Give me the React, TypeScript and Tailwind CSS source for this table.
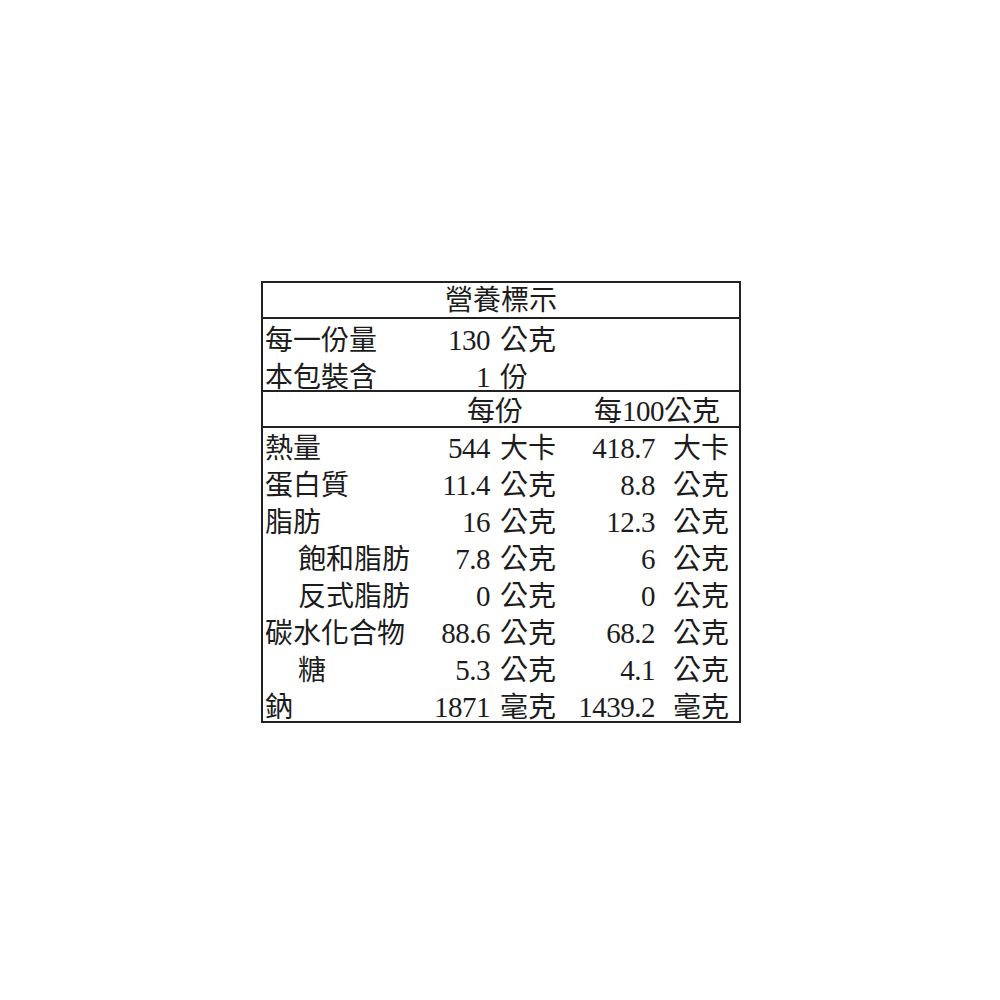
const font = { fontFamily: '"Liberation Serif", "Noto Sans CJK TC", serif' };

type Row = {
  label: string;
  indent?: boolean;
  a: string;
  ua: string;
  b: string;
  ub: string;
};

const rows: Row[] = [
  { label: "熱量", a: "544", ua: "大卡", b: "418.7", ub: "大卡" },
  { label: "蛋白質", a: "11.4", ua: "公克", b: "8.8", ub: "公克" },
  { label: "脂肪", a: "16", ua: "公克", b: "12.3", ub: "公克" },
  { label: "飽和脂肪", indent: true, a: "7.8", ua: "公克", b: "6", ub: "公克" },
  { label: "反式脂肪", indent: true, a: "0", ua: "公克", b: "0", ub: "公克" },
  { label: "碳水化合物", a: "88.6", ua: "公克", b: "68.2", ub: "公克" },
  { label: "糖", indent: true, a: "5.3", ua: "公克", b: "4.1", ub: "公克" },
  { label: "鈉", a: "1871", ua: "毫克", b: "1439.2", ub: "毫克" },
];

const grid = "grid grid-cols-[160px_67px_66px_99px_74px] items-center";
const num = "text-right text-[29px] tracking-[-0.5px]";

export default function App() {
  return (
    <div className="w-[1000px] h-[1000px] bg-white pt-[281px] pl-[261px]" style={font}>
      <div className="w-[480px] border-2 border-[#222] text-[28px] text-[#1c1c1c]">
        {/* title */}
        <div className="h-[36px] pt-[2px] flex items-center justify-center leading-none border-b-2 border-[#222]">
          營養標示
        </div>

        {/* serving info */}
        <div className="h-[73px] pt-[3px] border-b-2 border-[#222]">
          <div className={`${grid} h-[37px] leading-[37px]`}>
            <div className="pl-[2px]">每一份量</div>
            <div className={num}>130</div>
            <div className="pl-[10px]">公克</div>
          </div>
          <div className={`${grid} h-[37px] leading-[37px]`}>
            <div className="pl-[2px]">本包裝含</div>
            <div className={num}>1</div>
            <div className="pl-[10px]">份</div>
          </div>
        </div>

        {/* column header */}
        <div className={`${grid} h-[36px] pt-[2px] leading-[34px] border-b-2 border-[#222]`}>
          <div />
          <div className="col-span-2 pl-[44px]">每份</div>
          <div className="col-span-2 pl-[38px]">
            每<span className="text-[29px] tracking-[-0.5px]">100</span>公克
          </div>
        </div>

        {/* nutrients */}
        <div className="h-[293px] pt-[2px]">
          {rows.map((r) => (
            <div key={r.label} className={`${grid} h-[37px] leading-[37px]`}>
              <div className={r.indent ? "pl-[35px]" : "pl-[2px]"}>{r.label}</div>
              <div className={num}>{r.a}</div>
              <div className="pl-[10px]">{r.ua}</div>
              <div className={num}>{r.b}</div>
              <div className="pl-[18px]">{r.ub}</div>
            </div>
          ))}
        </div>
      </div>
    </div>
  );
}
